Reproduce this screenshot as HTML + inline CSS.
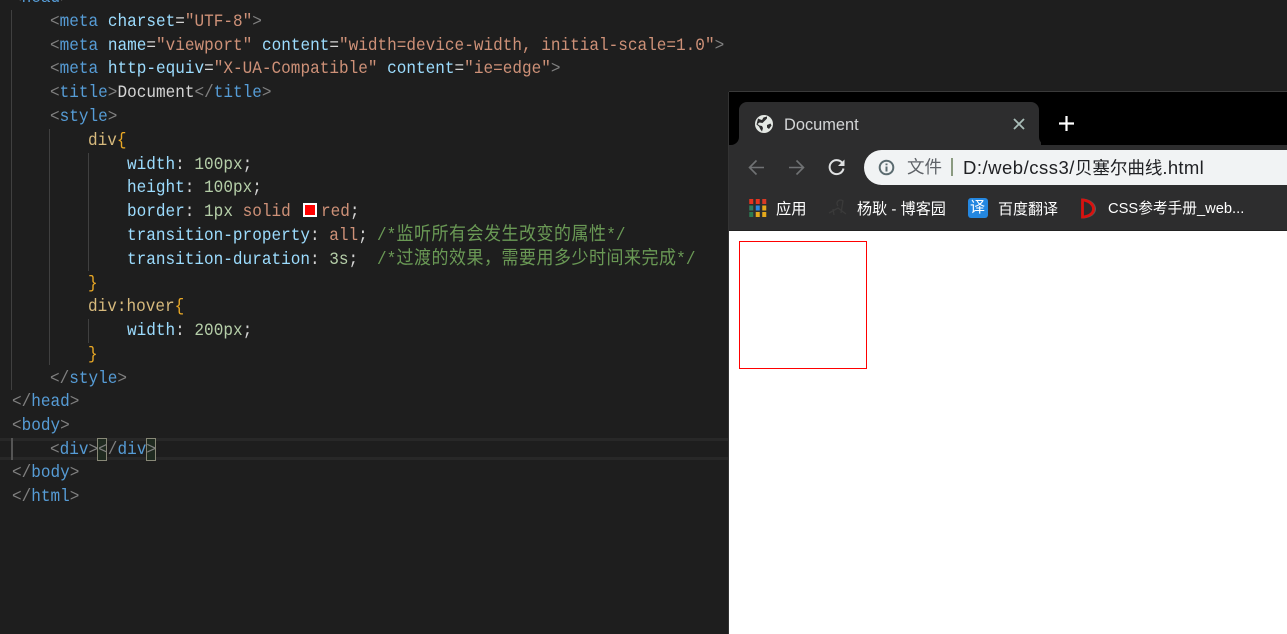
<!DOCTYPE html>
<html><head><meta charset="utf-8"><title>Document</title>
<style>
html,body{margin:0;padding:0;width:1287px;height:634px;overflow:hidden;background:#1e1e1e}
.a{position:absolute}
.l{position:absolute;margin-top:1px;white-space:pre;font-family:"Liberation Mono","Noto Sans CJK SC",monospace;font-size:17.5px;line-height:24px;height:24px;color:#d4d4d4;transform:scaleX(.917);transform-origin:0 0}
.l i{font-style:normal;font-size:18.5px;font-family:"Noto Sans CJK SC",sans-serif;line-height:18px;height:18px;font-weight:400;letter-spacing:0;display:inline-block;width:19.08px;text-align:center;vertical-align:baseline}
.b{color:#808080}.t{color:#569cd6}.k{color:#9cdcfe}.s{color:#ce9178}.n{color:#b5cea8}.c{color:#6a9955}.e{color:#d7ba7d}.y{color:#e9a825}
.g{position:absolute;width:1px;background:#404040}
.u{position:absolute;white-space:nowrap;font-family:"Liberation Sans","Noto Sans CJK SC",sans-serif}
</style></head><body>
<div class="a" style="left:0;top:438px;width:729px;height:22px;border-top:3px solid #282828;border-bottom:3px solid #282828;box-sizing:border-box"></div>
<div class="g" style="left:11px;top:10px;height:380px"></div>
<div class="g" style="left:49px;top:129px;height:236px"></div>
<div class="g" style="left:88px;top:153px;height:118px"></div>
<div class="g" style="left:88px;top:319px;height:24px"></div>
<div class="a" style="left:11px;top:438px;width:2px;height:22px;background:#555"></div>
<div class="a" style="left:97px;top:438px;width:10px;height:23px;border:1px solid #888877;box-sizing:border-box;background:#1f2a20"></div>
<div class="a" style="left:146px;top:438px;width:10px;height:23px;border:1px solid #888877;box-sizing:border-box;background:#1f2a20"></div>

<div class="l" style="left:12px;top:-15px"><span class="b">&lt;</span><span class="t">head</span><span class="b">&gt;</span></div>
<div class="l" style="left:50px;top:9px"><span class="b">&lt;</span><span class="t">meta</span> <span class="k">charset</span>=<span class="s">"UTF-8"</span><span class="b">&gt;</span></div>
<div class="l" style="left:50px;top:33px"><span class="b">&lt;</span><span class="t">meta</span> <span class="k">name</span>=<span class="s">"viewport"</span> <span class="k">content</span>=<span class="s">"width=device-width, initial-scale=1.0"</span><span class="b">&gt;</span></div>
<div class="l" style="left:50px;top:56px"><span class="b">&lt;</span><span class="t">meta</span> <span class="k">http-equiv</span>=<span class="s">"X-UA-Compatible"</span> <span class="k">content</span>=<span class="s">"ie=edge"</span><span class="b">&gt;</span></div>
<div class="l" style="left:50px;top:80px"><span class="b">&lt;</span><span class="t">title</span><span class="b">&gt;</span>Document<span class="b">&lt;/</span><span class="t">title</span><span class="b">&gt;</span></div>
<div class="l" style="left:50px;top:104px"><span class="b">&lt;</span><span class="t">style</span><span class="b">&gt;</span></div>
<div class="l" style="left:88px;top:128px"><span class="e">div</span><span class="y">{</span></div>
<div class="l" style="left:127px;top:152px"><span class="k">width</span>: <span class="n">100px</span>;</div>
<div class="l" style="left:127px;top:175px"><span class="k">height</span>: <span class="n">100px</span>;</div>
<div class="l" style="left:127px;top:199px"><span class="k">border</span>: <span class="n">1px</span> <span class="s">solid</span></div>
<div class="a" style="left:303px;top:203px;width:14px;height:14px;background:#f00;border:2px solid #fff;box-sizing:border-box;"></div>
<div class="l" style="left:321px;top:199px"><span class="s">red</span>;</div>
<div class="l" style="left:127px;top:223px"><span class="k">transition-property</span>: <span class="s">all</span>; </div>
<div class="l c" style="left:377px;top:223px">/*<i>监</i><i>听</i><i>所</i><i>有</i><i>会</i><i>发</i><i>生</i><i>改</i><i>变</i><i>的</i><i>属</i><i>性</i>*/</div>
<div class="l" style="left:127px;top:247px"><span class="k">transition-duration</span>: <span class="n">3s</span>;</div>
<div class="l c" style="left:377px;top:247px">/*<i>过</i><i>渡</i><i>的</i><i>效</i><i>果</i><i>，</i><i>需</i><i>要</i><i>用</i><i>多</i><i>少</i><i>时</i><i>间</i><i>来</i><i>完</i><i>成</i>*/</div>
<div class="l" style="left:88px;top:271px"><span class="y">}</span></div>
<div class="l" style="left:88px;top:294px"><span class="e">div:hover</span><span class="y">{</span></div>
<div class="l" style="left:127px;top:318px"><span class="k">width</span>: <span class="n">200px</span>;</div>
<div class="l" style="left:88px;top:342px"><span class="y">}</span></div>
<div class="l" style="left:50px;top:366px"><span class="b">&lt;/</span><span class="t">style</span><span class="b">&gt;</span></div>
<div class="l" style="left:12px;top:389px"><span class="b">&lt;/</span><span class="t">head</span><span class="b">&gt;</span></div>
<div class="l" style="left:12px;top:413px"><span class="b">&lt;</span><span class="t">body</span><span class="b">&gt;</span></div>
<div class="l" style="left:50px;top:437px"><span class="b">&lt;</span><span class="t">div</span><span class="b">&gt;&lt;/</span><span class="t">div</span><span class="b">&gt;</span></div>
<div class="l" style="left:12px;top:460px"><span class="b">&lt;/</span><span class="t">body</span><span class="b">&gt;</span></div>
<div class="l" style="left:12px;top:484px"><span class="b">&lt;/</span><span class="t">html</span><span class="b">&gt;</span></div>

<!-- browser -->
<div class="a" style="left:729px;top:92px;width:558px;height:542px;background:#fff;overflow:hidden;box-shadow:0 -1px 0 #3a3a3a,-1px 0 0 #333">
  <div class="a" style="left:0;top:0;width:558px;height:53px;background:#000"></div>
  <div class="a" style="left:0;top:53px;width:558px;height:85px;background:#2d2d2e;border-bottom:1px solid #222"></div>
  <!-- tab -->
  <div class="a" style="left:0;top:44px;width:10px;height:9px;background:#2d2d2e"></div>
  <div class="a" style="left:0;top:41px;width:10px;height:12px;background:#000;border-radius:0 0 8px 0"></div>
  <div class="a" style="left:300px;top:44px;width:12px;height:9px;background:#2d2d2e"></div>
  <div class="a" style="left:310px;top:40px;width:12px;height:13px;background:#000;border-radius:0 0 0 8px"></div>
  <div class="a" style="left:10px;top:10px;width:300px;height:43px;background:#2d2d2e;border-radius:8px 8px 0 0"></div>
  <svg class="a" style="left:25px;top:22px" width="20" height="20" viewBox="0 0 20 20"><circle cx="10" cy="10" r="9" fill="#e4e8e4"/><path d="M4 4.500C6 5.500 7 5.500 8 6L9.500 3.500 13 2.500 13 4.500 10.500 7 8.500 9 5.500 8.500 3.500 10 5.500 11.500 8 12 9 14 8 17.500 6.500 15.500 5 12.500 2.500 10.500ZM13 11l3.500-1.500 1 2-2.500 3.500-2-1.500z" fill="#2d2d2e"/></svg>
  <div class="u" style="left:55px;top:23px;font-size:16.400px;line-height:20px;color:#d3d5d6">Document</div>
  <svg class="a" style="left:284px;top:26px" width="12" height="12" viewBox="0 0 12 12"><path d="M1 1L11 11M11 1L1 11" stroke="#a9bdb8" stroke-width="1.800"/></svg>
  <svg class="a" style="left:329px;top:23px" width="17" height="17" viewBox="0 0 17 17"><path d="M8.500 1V16M1 8.500H16" stroke="#fff" stroke-width="2.200"/></svg>
  <!-- nav -->
  <svg class="a" style="left:18px;top:66px" width="19" height="19" viewBox="0 0 19 19"><path d="M17 9.500H3M9.500 2.500L2.500 9.500 9.500 16.500" fill="none" stroke="#707274" stroke-width="1.600"/></svg>
  <svg class="a" style="left:58px;top:66px" width="19" height="19" viewBox="0 0 19 19"><path d="M2 9.500H16M9.500 2.500L16.500 9.500 9.500 16.500" fill="none" stroke="#707274" stroke-width="1.600"/></svg>
  <svg class="a" style="left:98px;top:66px" width="19" height="19" viewBox="0 0 19 19"><path d="M15.300 5A7 7 0 1 0 16.500 10.500" fill="none" stroke="#dfe1e2" stroke-width="2"/><path d="M17.500 1.500V8H11Z" fill="#dfe1e2"/></svg>
  <!-- omnibox -->
  <div class="a" style="left:135px;top:58px;width:440px;height:35px;background:#f1f3f4;border-radius:18px"></div>
  <svg class="a" style="left:149px;top:67px" width="17" height="17" viewBox="0 0 17 17"><circle cx="8.500" cy="8.500" r="6.800" fill="none" stroke="#5b6b70" stroke-width="2"/><path d="M8.500 7.500V12.500M8.500 4.500V6.200" stroke="#5b6b70" stroke-width="2"/></svg>
  <div class="u" style="left:178px;top:64px;font-size:17.500px;line-height:23px;color:#5f6368">文件</div>
  <div class="a" style="left:222px;top:66px;width:2px;height:18px;background:#8a9a80"></div>
  <div class="u" style="left:234px;top:64px;font-size:17.500px;line-height:23px;color:#202124"><span style="font-size:18.500px;letter-spacing:.5px">D:/web/css3/</span>贝塞尔曲线<span style="font-size:18.500px;letter-spacing:.3px">.html</span></div>
  <!-- bookmarks -->
  <svg class="a" style="left:20px;top:106.500px" width="17.500" height="18" viewBox="0 0 17 18">
    <rect x="0" y="0" width="4" height="5" fill="#e8331f"/><rect x="6.500" y="0" width="4" height="5" fill="#e8331f"/><rect x="13" y="0" width="4" height="5" fill="#d93a25"/>
    <rect x="0" y="6.500" width="4" height="5" fill="#2f7d5f"/><rect x="6.500" y="6.500" width="4" height="5" fill="#2b86e0"/><rect x="13" y="6.500" width="4" height="5" fill="#e5a91c"/>
    <rect x="0" y="13" width="4" height="5" fill="#2c7a52"/><rect x="6.500" y="13" width="4" height="5" fill="#e5a91c"/><rect x="13" y="13" width="4" height="5" fill="#e5a91c"/>
  </svg>
  <div class="u" style="left:47px;top:108px;font-size:15.300px;line-height:19px;color:#fff">应用</div>
  <svg class="a" style="left:99px;top:106px" width="20" height="20" viewBox="0 0 20 20"><path d="M1 15L10 10 18 16M10 8A3.500 3.500 0 1 1 15 3L13 15M5 11L6 17" fill="none" stroke="#3a3a3a" stroke-width="1.300"/></svg>
  <div class="u" style="left:128px;top:108px;font-size:15.100px;line-height:19px;color:#fff">杨耿 - 博客园</div>
  <div class="a" style="left:239px;top:106px;width:20px;height:20px;background:#2487e0;border-radius:3px;"></div>
  <div class="u" style="left:241px;top:107px;font-size:15px;line-height:18px;color:#fff">译</div>
  <div class="u" style="left:269px;top:108px;font-size:15px;line-height:19px;color:#fff">百度翻译</div>
  <svg class="a" style="left:350px;top:105px" width="18" height="23" viewBox="0 0 18 23"><path d="M2.500 1.500C11 1.500 17 6.500 17 12 17 17.500 11 21.500 2.500 21.500Z" fill="#5a5a5a"/><path d="M3.500 3C10 3.500 14.500 7.500 14.500 12 14.500 16.500 10 19.500 3.500 20Z" fill="#2d2d2e" stroke="#d9120f" stroke-width="2.800"/></svg>
  <div class="u" style="left:379px;top:108px;font-size:14.700px;line-height:19px;color:#fff">CSS参考手册_web...</div>
  <!-- content -->
  <div class="a" style="left:10px;top:149px;width:128px;height:128px;border:1px solid #f00;box-sizing:border-box"></div>
</div>
</body></html>
